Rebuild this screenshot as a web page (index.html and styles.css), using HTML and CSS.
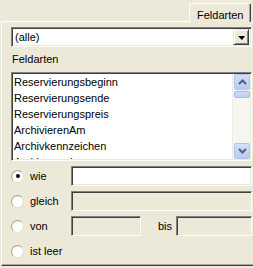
FILE: index.html
```html
<!DOCTYPE html>
<html lang="de">
<head>
    <link rel="stylesheet" href="styles.css">
    <meta charset="UTF-8">
    <title>Feldarten</title>
</head>
<body>
    <div class="tabs">
        <div class="tab">Feldarten</div>
    </div>
    <div class="panel">
        <div class="combo">
            <span class="combo-text">(alle)</span>
            <span class="drop-btn"><span class="arrow"></span></span>
        </div>
        <div class="caption">Feldarten</div>
        <div class="listbox">
            <ul class="items">
                <li>Reservierungsbeginn</li>
                <li>Reservierungsende</li>
                <li>Reservierungspreis</li>
                <li>ArchivierenAm</li>
                <li>Archivkennzeichen</li>
                <li>Archivgrund</li>
            </ul>
            <div class="scrollbar">
                <div class="sb-btn">
                    <svg width="9" height="6" viewBox="0 0 9 6"><path d="M1 5 L4.5 1.5 L8 5" fill="none" stroke="#4d6185" stroke-width="2"/></svg>
                </div>
                <div class="sb-thumb"></div>
                <div class="sb-track"></div>
                <div class="sb-btn">
                    <svg width="9" height="6" viewBox="0 0 9 6"><path d="M1 1 L4.5 4.5 L8 1" fill="none" stroke="#4d6185" stroke-width="2"/></svg>
                </div>
            </div>
        </div>
        <div class="criteria">
            <label class="option"><span class="radio checked"></span>wie</label>
            <div class="field"></div>

            <label class="option"><span class="radio"></span>gleich</label>
            <div class="field disabled"></div>

            <label class="option"><span class="radio"></span>von</label>
            <div class="range">
                <div class="field disabled small"></div>
                <span class="to">bis</span>
                <div class="field disabled"></div>
            </div>

            <label class="option"><span class="radio"></span>ist leer</label>
            <div></div>
        </div>
    </div>
</body>
</html>
```

FILE: styles.css
```css
body {
    margin: 0;
    background-color: #ece9d8;
    font-family: Tahoma, "Liberation Sans", Arial, sans-serif;
    font-size: 11px;
    color: #000;
    overflow: hidden;
}

.tabs {
    height: 21px;
    display: flex;
    justify-content: flex-end;
    align-items: flex-end;
    padding-right: 2px;
}

.tab {
    position: relative;
    z-index: 1;
    box-sizing: border-box;
    width: 62px;
    height: 19px;
    margin-bottom: -1px;
    padding: 5px 0 0 7px;
    line-height: 13px;
    background-color: #ece9d8;
    border-top: 1px solid #fff;
    border-left: 1px solid #fff;
    border-right: 1px solid #404040;
    border-radius: 2px 2px 0 0;
    box-shadow: inset -1px 0 #aca899;
}

.panel {
    box-sizing: border-box;
    height: 245px;
    margin-left: 1px;
    padding: 5px 1px 0 9px;
    border-top: 1px solid #fff;
    border-left: 1px solid #fff;
    border-bottom: 1px solid #404040;
    box-shadow: inset 0 -1px #aca899;
}

.combo {
    box-sizing: border-box;
    height: 20px;
    display: flex;
    align-items: center;
    justify-content: space-between;
    background-color: #fff;
    border: 1px solid;
    border-color: #808080 #fff #fff #808080;
    box-shadow: inset 1px 1px #404040, inset -1px -1px #ece9d8;
    padding: 0 2px 0 2px;
}

.combo-text {
    line-height: 13px;
    padding-left: 1px;
}

.drop-btn {
    box-sizing: border-box;
    width: 16px;
    height: 16px;
    display: flex;
    align-items: center;
    justify-content: center;
    background-color: #ece9d8;
    border: 1px solid;
    border-color: #ece9d8 #404040 #404040 #ece9d8;
    box-shadow: inset 1px 1px #fff, inset -1px -1px #808080;
}

.arrow {
    width: 0;
    height: 0;
    border-left: 4px solid transparent;
    border-right: 3px solid transparent;
    border-top: 4px solid #000;
    margin-top: 1px;
}

.caption {
    margin-top: 6px;
    line-height: 13px;
    padding-left: 1px;
}

.listbox {
    box-sizing: border-box;
    height: 89px;
    margin-top: 6px;
    display: flex;
    background-color: #fff;
    border: 1px solid;
    border-color: #808080 #fff #fff #808080;
    box-shadow: inset 1px 1px #404040, inset -1px -1px #ece9d8;
    padding: 1px 1px 1px 1px;
    overflow: hidden;
}

.items {
    flex: 1;
    list-style: none;
    margin: 0;
    padding: 0 0 0 1px;
    overflow: hidden;
}

.items li {
    height: 16px;
    line-height: 16px;
    white-space: nowrap;
}

.scrollbar {
    width: 17px;
    display: flex;
    flex-direction: column;
    background-color: #f6f5ef;
    border-left: 1px solid #eeede5;
}

.sb-btn {
    box-sizing: border-box;
    height: 16px;
    margin: 0 0 0 1px;
    display: flex;
    align-items: center;
    justify-content: center;
    background: linear-gradient(#d3defb, #b7cbf5);
    border: 1px solid #b4c4ee;
    border-radius: 2px;
}

.sb-thumb {
    box-sizing: border-box;
    height: 7px;
    margin: 1px 0 0 1px;
    background: linear-gradient(#cfdbfb, #bccff7);
    border: 1px solid #a6b9e8;
    border-radius: 2px;
}

.sb-track {
    flex: 1;
}

.criteria {
    margin-top: 5px;
    display: grid;
    grid-template-columns: 60px 1fr;
    grid-auto-rows: 20px;
    row-gap: 5px;
}

.option {
    display: flex;
    align-items: center;
    gap: 6px;
    line-height: 13px;
}

.radio {
    box-sizing: border-box;
    width: 13px;
    height: 13px;
    border-radius: 50%;
    border: 1px solid;
    border-color: #a7a59a #e2e0d6 #e2e0d6 #a7a59a;
    background: radial-gradient(circle at 60% 60%, #fff 55%, #e6e4da);
    display: flex;
    align-items: center;
    justify-content: center;
}

.radio.checked::after {
    content: "";
    width: 4px;
    height: 4px;
    border-radius: 50%;
    background-color: #000;
}

.field {
    box-sizing: border-box;
    height: 20px;
    background-color: #fff;
    border: 1px solid;
    border-color: #808080 #fff #fff #808080;
    box-shadow: inset 1px 1px #404040, inset -1px -1px #ece9d8;
}

.field.disabled {
    background-color: #ece9d8;
}

.range {
    display: flex;
    align-items: center;
}

.range .field {
    flex: 1;
}

.range .field.small {
    flex: none;
    width: 70px;
}

.to {
    margin: 0 4px 0 17px;
    line-height: 13px;
}
```
